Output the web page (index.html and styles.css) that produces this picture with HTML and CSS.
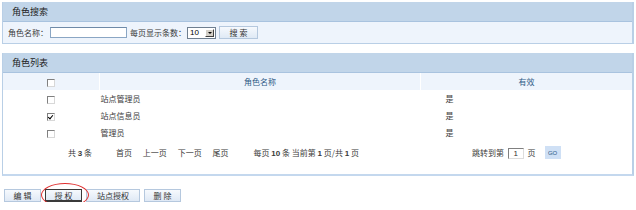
FILE: index.html
```html
<!DOCTYPE html>
<html>
	<head>
		<meta charset="utf-8">
		<link rel="stylesheet" href="styles.css">
	</head>
	<body>
		<div class="panel">
			<div class="panel-title">角色搜索</div>
			<div class="search-bar">
				<span class="lbl">角色名称：</span>
				<input type="text" class="txt">
				<span class="lbl">每页显示条数：</span>
				<span class="sel"><span class="sel-val">10</span><span class="sel-btn"><i></i></span></span>
				<button class="btn btn-search">搜 索</button>
			</div>
		</div>

		<div class="panel panel-list">
			<div class="panel-title">角色列表</div>
			<table class="grid">
				<tr class="head">
					<th class="c1"><input type="checkbox" class="cb"></th>
					<th class="c2">角色名称</th>
					<th class="c3">有效</th>
				</tr>
				<tr>
					<td class="c1"><input type="checkbox" class="cb"></td>
					<td class="c2">站点管理员</td>
					<td class="c3">是</td>
				</tr>
				<tr>
					<td class="c1"><input type="checkbox" class="cb" checked></td>
					<td class="c2">站点信息员</td>
					<td class="c3">是</td>
				</tr>
				<tr>
					<td class="c1"><input type="checkbox" class="cb"></td>
					<td class="c2">管理员</td>
					<td class="c3">是</td>
				</tr>
			</table>
			<div class="pager">
				<span class="total">共 <b>3</b> 条</span>
				<span class="links">
					<a>首页</a>
					<a>上一页</a>
					<a>下一页</a>
					<a>尾页</a>
				</span>
				<span class="info">每页 <b>10</b> 条 当前第 <b>1</b> 页/共 <b>1</b> 页</span>
				<span class="jump">跳转到第 <input type="text" class="pg" value="1"> 页</span>
				<button class="go">GO</button>
			</div>
		</div>

		<div class="actions">
			<button class="btn">编 辑</button>
			<span class="mark">
				<button class="btn btn-on">授 权</button>
			</span>
			<button class="btn">站点授权</button>
			<button class="btn">删 除</button>
		</div>
	</body>
</html>
```

FILE: styles.css
```css
body{
	margin: 0;
	padding: 2px 2px 0 2px;
	font-family: "Noto Sans CJK SC", "Liberation Sans", sans-serif;
	font-size: 8px;
	color: #3a3a3a;
	background: #fff;
}
.panel{
	border: 1px solid #b9cfe6;
	border-top: none;
	border-right-width: 2px;
}
.panel-title{
	height: 19px;
	line-height: 19px;
	padding-left: 9px;
	font-size: 9px;
	color: #222;
	background: #c1d5e9;
	border-bottom: 1px solid #a9c3df;
}
.search-bar{
	height: 21px;
	display: flex;
	align-items: center;
	padding-left: 5px;
	background: #eef4fc;
}
.lbl{
	white-space: nowrap;
}
.txt{
	width: 75px;
	height: 9px;
	margin: 0 3px 0 2px;
	padding: 0;
	border: 1px solid #8aa6c4;
	border-top-color: #6f8aa8;
	background: #fff;
}
.sel{
	display: flex;
	align-items: center;
	width: 27px;
	height: 10px;
	margin-left: 1px;
	border: 1px solid #6f7f90;
	background: #fff;
}
.sel-val{
	flex: 1;
	padding-left: 2px;
	font-family: "Liberation Sans", sans-serif;
	font-size: 8px;
	line-height: 10px;
	color: #000;
}
.sel-btn{
	width: 9px;
	height: 8px;
	margin-right: 1px;
	background: #d4d0c8;
	border: 1px solid;
	border-color: #fff #404040 #404040 #fff;
	display: flex;
	align-items: center;
	justify-content: center;
	box-sizing: border-box;
}
.sel-btn i{
	border-left: 2px solid transparent;
	border-right: 2px solid transparent;
	border-top: 2px solid #000;
}
.btn{
	height: 13px;
	padding: 0 8px;
	font-family: "Noto Sans CJK SC", sans-serif;
	font-size: 8px;
	line-height: 11px;
	color: #333;
	background: linear-gradient(#f6f9fd, #dfe9f5);
	border: 1px solid #b5c8de;
	border-radius: 0;
	cursor: pointer;
}
.btn-search{
	width: 39px;
	margin-left: 3px;
}
.panel-list{
	margin-top: 9px;
	border-bottom-width: 2px;
	border-bottom-color: #c4d8ee;
}
table.grid{
	width: 100%;
	border-collapse: collapse;
}
.grid td, .grid th{
	height: 17px;
	padding: 0;
	vertical-align: middle;
}
.grid .head th{
	background: #eef4fc;
	font-weight: normal;
	color: #2d5a86;
	border-left: 1px solid #fff;
}
.grid .head th.c1{
	border-left: none;
}
.c1{
	width: 96px;
	text-align: center;
}
.grid td.c2{
	width: 320px;
	padding-left: 1px;
}
.grid td.c3{
	padding-left: 25px;
}
.cb{
	-webkit-appearance: none;
	appearance: none;
	width: 8px;
	height: 8px;
	margin: 0;
	border: 1px solid #808080;
	border-right-color: #d8d8d8;
	border-bottom-color: #d8d8d8;
	background: #fff;
	vertical-align: middle;
	position: relative;
}
.cb:checked::after{
	content: "";
	position: absolute;
	left: 1px;
	top: 0px;
	width: 2px;
	height: 4px;
	border: solid #000;
	border-width: 0 1px 1px 0;
	transform: rotate(40deg);
}
.pager{
	height: 33px;
	display: flex;
	align-items: flex-start;
	padding-top: 5px;
	box-sizing: border-box;
	line-height: 14px;
	white-space: nowrap;
}
.pager b{
	font-family: "Liberation Sans", sans-serif;
	font-weight: bold;
}
.total{
	margin-left: 65px;
}
.links{
	margin-left: 24px;
}
.links a{
	margin-right: 9px;
}
.info{
	margin-left: 16px;
}
.jump{
	margin-left: 113px;
}
.pg{
	width: 14px;
	height: 9px;
	margin: 0 2px;
	padding: 0;
	border: 1px solid #808080;
	border-right-color: #ddd;
	border-bottom-color: #ddd;
	text-align: center;
	font-family: "Liberation Sans", sans-serif;
	font-size: 8px;
	color: #333;
	vertical-align: middle;
}
.go{
	width: 16px;
	height: 13px;
	margin-left: 9px;
	padding: 0;
	border: none;
	background: #cfe0f5;
	color: #2d5a86;
	font-family: "Liberation Sans", sans-serif;
	font-size: 6px;
}
.actions{
	display: flex;
	align-items: center;
	margin-top: 13px;
	padding-left: 2px;
}
.actions .btn{
	width: 37px;
	margin-right: 4px;
}
.actions .btn:nth-last-child(2){
	width: 54px;
}
.mark{
	position: relative;
	margin-right: 4px;
}
.mark .btn{
	margin-right: 0;
}
.btn-on{
	border-color: #3a3a3a;
	border-width: 1px 1px 2px 1px;
}
.mark::after{
	content: "";
	position: absolute;
	left: -4px;
	top: -6px;
	width: 46px;
	height: 22px;
	border: 1px solid #e03030;
	border-radius: 50%;
}
```
